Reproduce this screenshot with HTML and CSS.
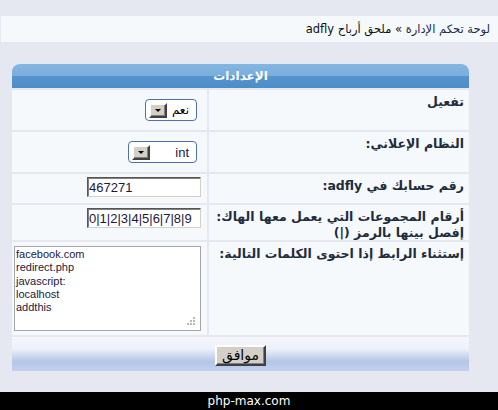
FILE: index.html
```html
<!DOCTYPE html>
<html dir="rtl">
<head>
    <title>ملحق أرباح adfly</title>
    <meta charset="utf-8">
    <link rel="stylesheet" href="styles.css">
</head>
<body>
    <div class="nav">
        <a href="#">لوحة تحكم الإدارة</a> &raquo; ملحق أرباح adfly
    </div>

    <div class="panel">
        <div class="panel-head">الإعدادات</div>
        <div class="form">
            <div class="label">تفعيل</div>
            <div class="value mid">
                <div class="select sel-yes">
                    <span class="sel-text">نعم</span>
                    <span class="sel-btn"><span class="tri"></span></span>
                </div>
            </div>

            <div class="label">النظام الإعلاني:</div>
            <div class="value mid">
                <div class="select sel-type">
                    <span class="sel-text latin">int</span>
                    <span class="sel-btn"><span class="tri"></span></span>
                </div>
            </div>

            <div class="label">رقم حسابك في adfly:</div>
            <div class="value">
                <input class="field" type="text" value="467271" dir="ltr">
            </div>

            <div class="label">أرقام المجموعات التي يعمل معها الهاك:<br>إفصل بينها بالرمز (|)</div>
            <div class="value">
                <input class="field" type="text" value="0|1|2|3|4|5|6|7|8|9" dir="ltr">
            </div>

            <div class="label">إستثناء الرابط إذا احتوى الكلمات التالية:</div>
            <div class="value">
                <div class="area-wrap">
                    <textarea class="area" dir="ltr">facebook.com
redirect.php
javascript:
localhost
addthis</textarea>
                    <svg class="grip" width="9" height="9" viewBox="0 0 9 9">
                        <rect x="6" y="0" width="2" height="2" fill="#b8b8b8"/>
                        <rect x="3" y="3" width="2" height="2" fill="#b8b8b8"/>
                        <rect x="6" y="3" width="2" height="2" fill="#b8b8b8"/>
                        <rect x="0" y="6" width="2" height="2" fill="#b8b8b8"/>
                        <rect x="3" y="6" width="2" height="2" fill="#b8b8b8"/>
                        <rect x="6" y="6" width="2" height="2" fill="#b8b8b8"/>
                    </svg>
                </div>
            </div>
        </div>
        <div class="panel-foot">
            <button class="submit" type="button">موافق</button>
        </div>
    </div>

    <div class="copy">php-max.com</div>
</body>
</html>
```

FILE: styles.css
```css
html {
    font-family: Tahoma, "DejaVu Sans", sans-serif;
}
body {
    margin: 0;
    padding-top: 16px;
    background-color: #e5e8f0;
    font-size: 12px;
    color: #000;
}
.nav {
    height: 26px;
    line-height: 26px;
    margin-left: 1px;
    padding-right: 8px;
    background-color: #f5f9fb;
    color: #111;
    font-size: 11.5px;
}
.nav a {
    color: #1c2a50;
    text-decoration: none;
}
.panel {
    margin: 22px 29px 0 12px;
}
.panel-head {
    height: 24px;
    line-height: 24px;
    text-align: center;
    color: #fff;
    font-weight: bold;
    font-size: 12px;
    border-radius: 8px 8px 0 0;
    background: linear-gradient(#84b6e1, #79addc 52%, #5594cd 52%, #4d8dc8);
}
.form {
    display: grid;
    grid-template-columns: 260px 195px;
    grid-template-rows: 40px 40px 29px 35px 93px;
    gap: 2px;
    padding-top: 2px;
}
.label {
    background-color: #f5f9fb;
    padding: 4px 5px 0 4px;
    font-weight: bold;
    font-size: 12.5px;
    line-height: 16px;
    color: #1e2c3c;
}
.value {
    background-color: #f5f9fb;
    display: flex;
    align-items: flex-start;
    padding: 3px 6px 0 4px;
}
.value.mid {
    align-items: center;
    padding: 0 10px 0 0;
}
.select {
    display: flex;
    align-items: center;
    justify-content: space-between;
    height: 20px;
    background-color: #fff;
    border: 1px solid #4b70b6;
    border-radius: 4px;
    padding: 0 7px 0 3px;
}
.sel-yes {
    width: 40px;
}
.sel-type {
    width: 57px;
}
.sel-text {
    font-size: 12px;
    color: #000;
}
.sel-text.latin {
    font-family: "Liberation Sans", Arial, sans-serif;
    font-size: 13px;
    color: #1a1a40;
}
.sel-btn {
    display: flex;
    align-items: center;
    justify-content: center;
    width: 14px;
    height: 11px;
    background-color: #d4d0c8;
    border: 2px solid;
    border-color: #fff #404040 #404040 #fff;
    box-shadow: inset -1px -1px #808080;
}
.tri {
    width: 0;
    height: 0;
    border-left: 3px solid transparent;
    border-right: 3px solid transparent;
    border-top: 3px solid #000;
}
.field {
    box-sizing: border-box;
    width: 114px;
    height: 20px;
    margin: 0;
    padding: 0 1px;
    border: 1px solid;
    border-color: #555 #d4d0c8 #d4d0c8 #555;
    box-shadow: inset 1px 1px #808080;
    background-color: #fff;
    font-family: "Liberation Sans", Arial, sans-serif;
    font-size: 13px;
    color: #1a1a40;
}
.area-wrap {
    position: relative;
    margin-top: 1px;
}
.area {
    display: block;
    box-sizing: border-box;
    width: 187px;
    height: 85px;
    margin: 0;
    padding: 1px 1px;
    border: 1px solid #a5a5a5;
    background-color: #fff;
    resize: none;
    font-family: "Liberation Sans", Arial, sans-serif;
    font-size: 11px;
    line-height: 13.3px;
    color: #1a1a40;
}
.grip {
    position: absolute;
    right: 5px;
    bottom: 5px;
}
.panel-foot {
    height: 34px;
    margin-top: 2px;
    display: flex;
    justify-content: center;
    align-items: center;
    padding-top: 2px;
    box-sizing: border-box;
    background: linear-gradient(#f4f6fb, #edf1f9 35%, #b4c5e6 72%, #c3d1ee);
}
.submit {
    width: 51px;
    height: 21px;
    padding: 0;
    background-color: #d4d0c8;
    border: 2px solid;
    border-color: #fff #404040 #404040 #fff;
    box-shadow: inset -1px -1px #808080;
    font-family: Tahoma, "DejaVu Sans", sans-serif;
    font-size: 14px;
    color: #000;
}
.copy {
    margin-top: 21px;
    height: 18px;
    line-height: 18px;
    background-color: #000;
    color: #fff;
    text-align: center;
    font-family: "DejaVu Sans", Verdana, sans-serif;
    font-size: 12px;
}
```
